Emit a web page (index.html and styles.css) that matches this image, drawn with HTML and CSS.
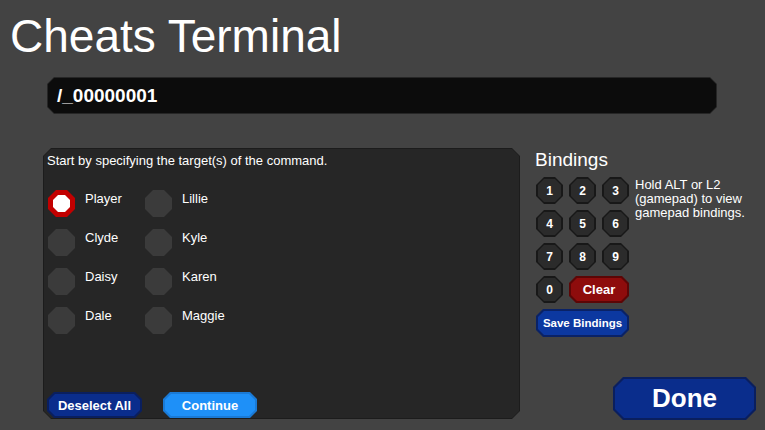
FILE: index.html
```html
<!doctype html>
<html lang="en">
<head>
<meta charset="utf-8">
<title>Cheats Terminal</title>
<link rel="stylesheet" href="styles.css">
</head>
<body>

<h1 class="title">Cheats Terminal</h1>

<div class="command oct">
  <div class="command-face oct">/_00000001</div>
</div>

<div class="main">
  <div class="panel oct">
    <div class="panel-face oct">
      <p class="intro">Start by specifying the target(s) of the command.</p>

      <div class="targets">
        <div class="target"><span class="radio oct selected"></span><span class="name">Player</span></div>
        <div class="target"><span class="radio oct"></span><span class="name">Lillie</span></div>
        <div class="target"><span class="radio oct"></span><span class="name">Clyde</span></div>
        <div class="target"><span class="radio oct"></span><span class="name">Kyle</span></div>
        <div class="target"><span class="radio oct"></span><span class="name">Daisy</span></div>
        <div class="target"><span class="radio oct"></span><span class="name">Karen</span></div>
        <div class="target"><span class="radio oct"></span><span class="name">Dale</span></div>
        <div class="target"><span class="radio oct"></span><span class="name">Maggie</span></div>
      </div>

      <div class="actions">
        <button class="btn btn-navy btn-deselect oct"><span class="face oct">Deselect All</span></button>
        <button class="btn btn-sky btn-continue oct"><span class="face oct">Continue</span></button>
      </div>
    </div>
  </div>

  <div class="side">
    <h2 class="side-title">Bindings</h2>

    <div class="bindings">
      <div class="keys">
        <button class="key oct"><span class="face oct">1</span></button>
        <button class="key oct"><span class="face oct">2</span></button>
        <button class="key oct"><span class="face oct">3</span></button>
        <button class="key oct"><span class="face oct">4</span></button>
        <button class="key oct"><span class="face oct">5</span></button>
        <button class="key oct"><span class="face oct">6</span></button>
        <button class="key oct"><span class="face oct">7</span></button>
        <button class="key oct"><span class="face oct">8</span></button>
        <button class="key oct"><span class="face oct">9</span></button>
        <button class="key oct"><span class="face oct">0</span></button>
        <button class="btn btn-red btn-clear oct"><span class="face oct">Clear</span></button>
        <button class="btn btn-blue btn-save oct"><span class="face oct">Save Bindings</span></button>
      </div>
      <p class="hint">Hold ALT or L2 (gamepad) to view gamepad bindings.</p>
    </div>

    <button class="btn btn-navy btn-done oct"><span class="face oct">Done</span></button>
  </div>
</div>

</body>
</html>
```

FILE: styles.css
```css
* {
  box-sizing: border-box;
}

body {
  background-color: #434343;
  font-family: "Liberation Sans", Arial, sans-serif;
  font-size: 13px;
  color: white;
  margin: 0;
  width: 765px;
  height: 430px;
  overflow: hidden;
}

/* clipped-corner shape used by every box and button */
.oct {
  --c: 8px;
  clip-path: polygon(var(--c) 0, calc(100% - var(--c)) 0, 100% var(--c), 100% calc(100% - var(--c)),
                     calc(100% - var(--c)) 100%, var(--c) 100%, 0 calc(100% - var(--c)), 0 var(--c));
}

.title {
  margin: 0;
  padding: 10px 0 0 10px;
  font-size: 46px;
  font-weight: normal;
  line-height: 52px;
}

.command {
  --c: 7px;
  margin: 15px 0 0 47px;
  width: 670px;
  height: 37px;
  padding: 1px;
  background: #262626;
}

.command-face {
  --c: 6px;
  height: 100%;
  background: #0c0c0c;
  padding-left: 9px;
  display: flex;
  align-items: center;
  font-size: 19px;
  font-weight: bold;
}

.main {
  display: flex;
  align-items: flex-start;
  margin-top: 34px;
  padding-left: 43px;
}

.panel {
  width: 477px;
  height: 271px;
  padding: 1px;
  background: #1c1c1c;
}

.panel-face {
  --c: 7px;
  height: 100%;
  background: #262626;
  padding: 4px 0 0 3px;
  display: flex;
  flex-direction: column;
}

.intro {
  margin: 0;
  line-height: 15px;
}

.targets {
  display: grid;
  grid-template-columns: 97px 97px;
  row-gap: 12px;
  margin: 22px 0 0 1px;
}

.target {
  display: flex;
  align-items: flex-start;
  gap: 10px;
}

.name {
  line-height: 15px;
  padding-top: 1px;
}

.radio {
  width: 27px;
  height: 27px;
  background: #3b3b3b;
  display: grid;
}

.radio.selected {
  background: #c20000;
  padding: 5px;
}

.radio.selected::after {
  --c: 5px;
  content: "";
  background: white;
  clip-path: polygon(var(--c) 0, calc(100% - var(--c)) 0, 100% var(--c), 100% calc(100% - var(--c)),
                     calc(100% - var(--c)) 100%, var(--c) 100%, 0 calc(100% - var(--c)), 0 var(--c));
}

.actions {
  margin-top: auto;
  display: flex;
  gap: 21px;
}

button {
  font: inherit;
  color: inherit;
  border: 0;
  margin: 0;
  padding: 2px;
  cursor: pointer;
  display: grid;
}

.face {
  --c: 6px;
  display: grid;
  place-items: center;
  font-weight: bold;
}

.btn {
  --c: 7px;
  height: 26px;
}

.btn-navy { background: #0a1f5e; }
.btn-navy .face { background: #0a2d8c; }

.btn-sky { background: #1a7ad6; }
.btn-sky .face { background: #1e90f8; }

.btn-red { background: #5c0606; }
.btn-red .face { background: #8e0c0c; }

.btn-blue { background: #0a2266; }
.btn-blue .face { background: #0c38a0; }

.btn-deselect {
  width: 95px;
}

.btn-continue {
  width: 94px;
}

.side {
  margin-left: 15px;
  width: 221px;
  height: 272px;
  display: flex;
  flex-direction: column;
}

.side-title {
  margin: 2px 0 0 0;
  font-size: 19px;
  font-weight: normal;
  line-height: 20px;
}

.bindings {
  display: flex;
  align-items: flex-start;
  margin-top: 7px;
}

.keys {
  display: grid;
  grid-template-columns: repeat(3, 27px);
  grid-auto-rows: 27px;
  gap: 6px;
  margin-left: 1px;
}

.key {
  background: #181818;
}

.key .face {
  background: #2b2b2b;
  font-size: 12px;
}

.btn-clear {
  grid-column: span 2;
  height: 27px;
}

.btn-save {
  grid-column: span 3;
  height: 28px;
}

.btn-save .face {
  font-size: 11.5px;
}

.hint {
  margin: 1px 0 0 6px;
  width: 120px;
  line-height: 14px;
}

.btn-done {
  --c: 10px;
  margin-top: auto;
  align-self: flex-end;
  width: 143px;
  height: 43px;
}

.btn-done .face {
  --c: 9px;
  font-size: 26px;
}
```
